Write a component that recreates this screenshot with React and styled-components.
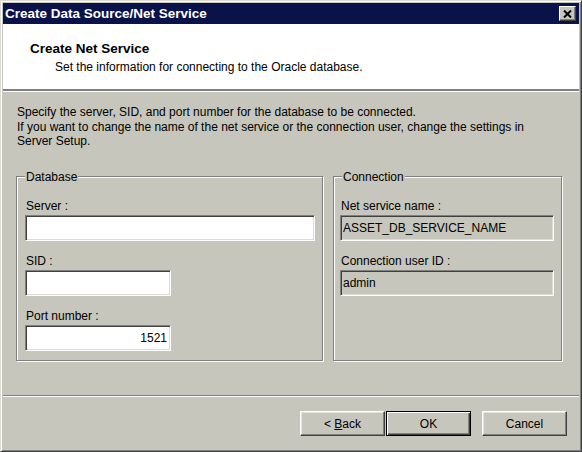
import React from "react";
import styled, { createGlobalStyle } from "styled-components";

const FACE = "#c6c6bc";
const DARK = "#404040";
const SHADOW = "#808080";
const FONT = `"Liberation Sans", Arial, sans-serif`;

const Global = createGlobalStyle`
  html, body { margin: 0; padding: 0; background: ${FACE}; }
  body { font-family: ${FONT}; font-size: 12px; color: #000; }
  * { box-sizing: border-box; }
`;

const Window = styled.div`
  width: 582px;
  height: 452px;
  display: flex;
  flex-direction: column;
  background: ${FACE};
  border: 1px solid;
  border-color: #dcdcd4 ${DARK} ${DARK} #dcdcd4;
  box-shadow: inset 1px 1px 0 #fff, inset -1px -1px 0 ${SHADOW};
  padding: 2px;
`;

const TitleBar = styled.div`
  height: 21px;
  flex: none;
  background: #0a124a;
  display: flex;
  align-items: center;
  justify-content: space-between;
  padding: 0 3px 0 2px;
`;

const TitleText = styled.span`
  color: #fff;
  font-weight: bold;
  font-size: 13.5px;
  line-height: 16px;
`;

const CloseButton = styled.button`
  width: 17px;
  height: 15px;
  padding: 0;
  display: flex;
  align-items: center;
  justify-content: center;
  background: ${FACE};
  border: 1px solid;
  border-color: #fff ${DARK} ${DARK} #fff;
  box-shadow: inset -1px -1px 0 ${SHADOW};
`;

const Header = styled.div`
  height: 68px;
  flex: none;
  background: #fff;
  border-bottom: 1px solid #fff;
  box-shadow: inset 0 -2px 0 ${SHADOW};
  padding: 17px 0 0 27px;
`;

const HeaderTitle = styled.div`
  font-weight: bold;
  font-size: 13.5px;
  line-height: 16px;
`;

const HeaderSub = styled.div`
  font-size: 12px;
  line-height: 14px;
  margin: 3px 0 0 25px;
`;

const Body = styled.div`
  flex: 1;
  padding: 13px 17px 0 13px;
  display: flex;
  flex-direction: column;
`;

const Intro = styled.p`
  margin: 0 0 21px 1px;
  font-size: 12px;
  line-height: 14.5px;
`;

const Groups = styled.div`
  display: flex;
  gap: 10px;
`;

const Group = styled.fieldset`
  margin: 0;
  width: ${(p) => p.$width}px;
  min-inline-size: 0;
  border: 1px solid ${SHADOW};
  box-shadow: 1px 1px 0 #fff, inset 1px 1px 0 #fff;
  padding: 15px 8px 9px ${(p) => p.$pad}px;
  display: flex;
  flex-direction: column;
  align-items: flex-start;
`;

const Legend = styled.legend`
  margin-left: ${(p) => p.$offset}px;
  padding: 0 1px;
  font-size: 12px;
  line-height: 14px;
  background: ${FACE};
`;

const Label = styled.label`
  font-size: 12px;
  line-height: 14px;
  margin-left: 1px;
  margin-bottom: 2px;
`;

const Input = styled.input`
  width: ${(p) => p.$width}px;
  height: 26px;
  margin: 0 0 13px 0;
  padding: 0 3px 0 2px;
  font-family: ${FONT};
  font-size: 12px;
  color: #000;
  text-align: ${(p) => (p.$right ? "right" : "left")};
  background: ${(p) => (p.$readOnly ? FACE : "#fff")};
  border: 1px solid;
  border-color: ${SHADOW} #fff #fff ${SHADOW};
  box-shadow: inset 1px 1px 0 ${DARK}, inset -1px -1px 0 #dcdcd4;
  outline: none;
  &:last-child { margin-bottom: 0; }
`;

const Footer = styled.div`
  flex: none;
  height: 54px;
  border-top: 1px solid ${SHADOW};
  box-shadow: inset 0 1px 0 #fff;
  display: flex;
  justify-content: flex-end;
  align-items: flex-start;
  padding: 15px 12px 0 0;
`;

const Button = styled.button`
  width: 85px;
  height: 25px;
  margin-left: ${(p) => p.$gap || 0}px;
  padding: 0;
  font-family: ${FONT};
  font-size: 12px;
  color: #000;
  background: ${FACE};
  border: 1px solid;
  border-color: ${(p) => (p.$default ? "#000" : `#fff ${DARK} ${DARK} #fff`)};
  box-shadow: ${(p) =>
    p.$default
      ? `inset 1px 1px 0 #fff, inset -1px -1px 0 ${DARK}, inset -2px -2px 0 ${SHADOW}`
      : `inset -1px -1px 0 ${SHADOW}, inset 1px 1px 0 #e4e4dc`};
`;

export default function App() {
  return (
    <>
      <Global />
      <Window>
        <TitleBar>
          <TitleText>Create Data Source/Net Service</TitleText>
          <CloseButton aria-label="Close">
            <svg width="9" height="8" viewBox="0 0 9 8">
              <path d="M1 0.5 L8 7.5 M8 0.5 L1 7.5" stroke="#000" strokeWidth="2" fill="none" />
            </svg>
          </CloseButton>
        </TitleBar>
        <Header>
          <HeaderTitle>Create Net Service</HeaderTitle>
          <HeaderSub>Set the information for connecting to the Oracle database.</HeaderSub>
        </Header>
        <Body>
          <Intro>
            Specify the server, SID, and port number for the database to be connected.
            <br />
            If you want to change the name of the net service or the connection user, change the settings in
            <br />
            Server Setup.
          </Intro>
          <Groups>
            <Group $width={307} $pad={8}>
              <Legend $offset={0}>Database</Legend>
              <Label>Server :</Label>
              <Input $width={290} defaultValue="" />
              <Label>SID :</Label>
              <Input $width={146} defaultValue="" />
              <Label>Port number :</Label>
              <Input $width={146} $right defaultValue="1521" />
            </Group>
            <Group $width={229} $pad={6}>
              <Legend $offset={2}>Connection</Legend>
              <Label>Net service name :</Label>
              <Input $width={214} $readOnly readOnly defaultValue="ASSET_DB_SERVICE_NAME" />
              <Label>Connection user ID :</Label>
              <Input $width={214} $readOnly readOnly defaultValue="admin" />
            </Group>
          </Groups>
        </Body>
        <Footer>
          <Button>
            &lt; <u>B</u>ack
          </Button>
          <Button $default $gap={1}>OK</Button>
          <Button $gap={11}>Cancel</Button>
        </Footer>
      </Window>
    </>
  );
}
